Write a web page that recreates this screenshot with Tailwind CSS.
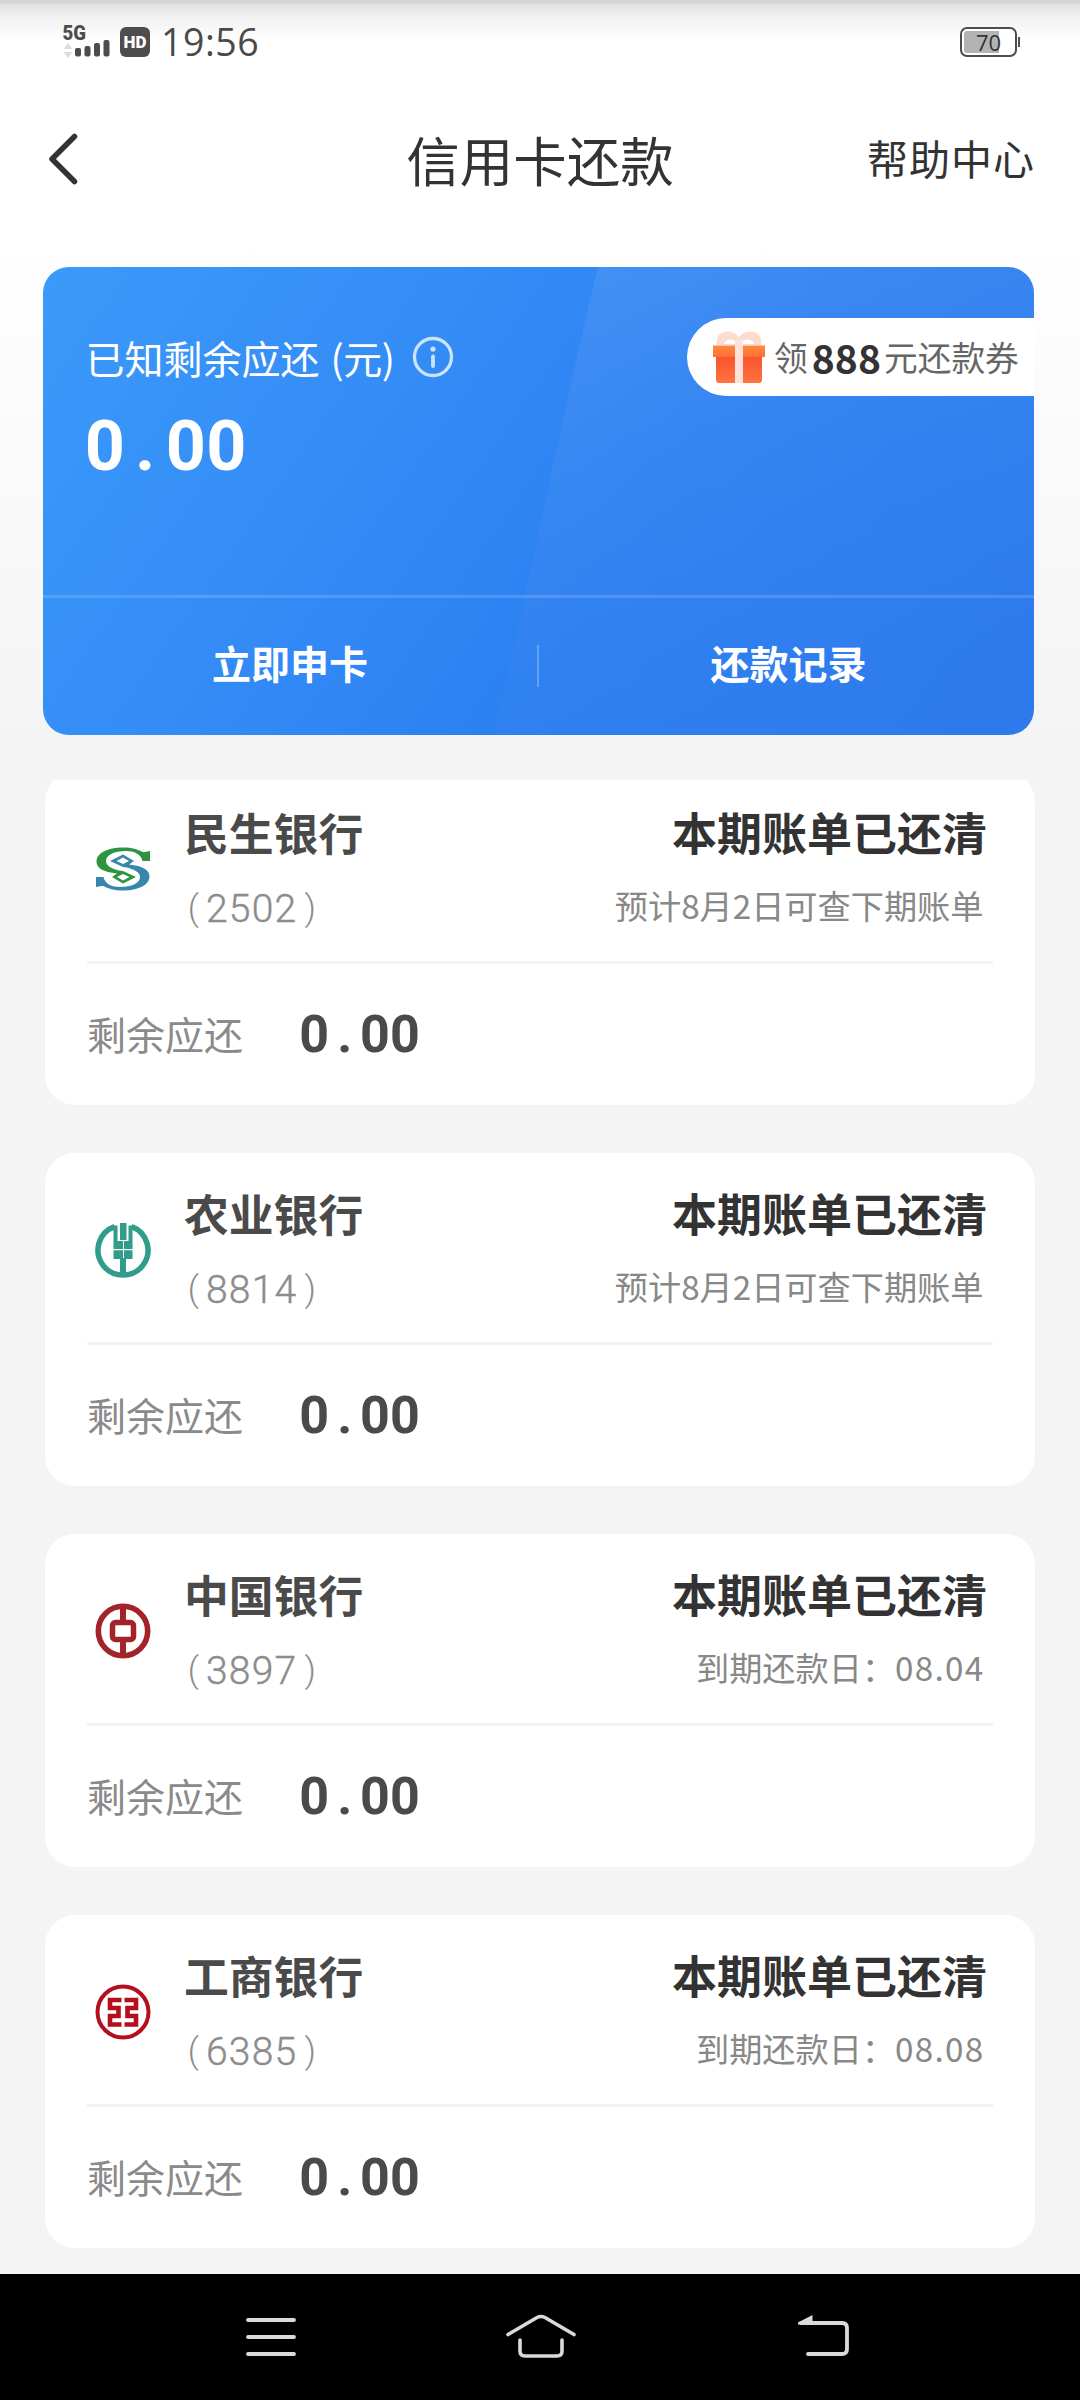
<!DOCTYPE html>
<html lang="zh-CN">
<head>
<meta charset="utf-8">
<title>信用卡还款</title>
<script src="https://cdn.jsdelivr.net/npm/@tailwindcss/browser@4"></script>
</head>
<body class="w-[1080px] h-[2400px] overflow-hidden flex flex-col font-['Noto_Sans_CJK_SC',sans-serif] text-[#333] bg-[linear-gradient(to_bottom,#fff_0,#fff_240px,#f4f4f4_740px)]">

<!-- status bar -->
<div class="h-[84px] shrink-0 flex items-start justify-between pt-[25px] pl-[62px] pr-[60px] bg-[linear-gradient(to_bottom,#d4d4d4_0,#d4d4d4_3px,#e2e2e2_4px,#f0f0f0_16px,#fafafa_32px,#ffffff_42px)]">
  <div class="flex items-start">
    <svg class="w-[50px] h-[34px] overflow-visible" viewBox="0 0 50 34">
      <text x="0.5" y="14.500" font-family="Roboto" font-weight="900" font-size="19.500" textLength="23.500" lengthAdjust="spacingAndGlyphs" fill="#4d4d4d">5G</text>
      <path d="M6 18l4.500 6h-9zM6 33l4.500-6h-9z" fill="#dcdcdc"/>
      <g fill="#4d4d4d"><rect x="13" y="23" width="6" height="8.500" rx="2"/><rect x="22.500" y="21" width="6" height="10.500" rx="2"/><rect x="32" y="18" width="6" height="13.500" rx="2"/><rect x="41.500" y="15" width="6" height="16.500" rx="2"/></g>
    </svg>
    <div class="ml-2 mt-0.5 w-[30px] h-[30px] rounded-[6px] bg-[#4d4d4d] text-white flex items-center justify-center font-['Roboto',sans-serif] font-black text-[17px] leading-none">HD</div>
    <div class="ml-[11px] -mt-0.5 font-['Open_Sans',sans-serif] font-medium text-[37.500px] leading-[37px] tracking-[0.500px] text-[#4a4a4a]">19:56</div>
  </div>
  <div class="flex items-center mt-0.5">
    <div class="relative w-[57px] h-[30px] rounded-[7px] border-[2.500px] border-[#4d4d4d] p-[2px] bg-white">
      <div class="w-[35px] h-full bg-[#b3b3b3] rounded-l-[3px]"></div>
      <div class="absolute inset-0 flex items-center justify-center font-['Open_Sans',sans-serif] text-[22px] leading-none">70</div>
    </div>
    <div class="ml-px w-[2px] h-[10px] bg-[#4d4d4d]"></div>
  </div>
</div>

<!-- title bar -->
<div class="h-[183px] shrink-0 grid grid-cols-[1fr_auto_1fr] items-start pt-[34px] pl-[44px] pr-[44px]">
  <svg class="mt-[10px] w-[40px] h-[62px]" viewBox="0 0 40 62" fill="none" stroke="#333" stroke-width="5.500" stroke-linecap="round" stroke-linejoin="round"><path d="M30.500 8.500L8 31l22.500 22.500"/></svg>
  <div class="mt-1 text-[53.500px] leading-[74px]">信用卡还款</div>
  <div class="mt-1 justify-self-end text-[41px] leading-[70px] tracking-[1px] mr-px">帮助中心</div>
</div>

<!-- summary card -->
<section class="relative mx-[43px] w-[991px] h-[468px] shrink-0 rounded-[26px] overflow-hidden text-white bg-[linear-gradient(125deg,#3b9af9_0%,#348bf6_35%,#2b80f2_60%,#2a78ec_100%)]">
  <svg class="absolute inset-0 w-full h-full" viewBox="0 0 991 468" preserveAspectRatio="none">
    <defs><linearGradient id="sheen" x1="0" y1="0" x2="0.3" y2="1"><stop offset="0" stop-color="#6aa2f0" stop-opacity=".34"/><stop offset=".5" stop-color="#4d8ff0" stop-opacity=".26"/><stop offset="1" stop-color="#3a7eec" stop-opacity=".25"/></linearGradient></defs>
    <path d="M555 0H991V468H451C468 400 530 100 555 0z" fill="url(#sheen)"/>
  </svg>
  <div class="relative flex flex-col h-full">
    <div class="h-[328px] flex justify-between">
      <div class="pl-[42.500px] pt-[61px]">
        <div class="flex items-center h-[58px]">
          <div class="text-[39px] leading-[57px] whitespace-pre">已知剩余应还<span class="ml-[11px] tracking-[-0.500px]">(元)</span></div>
          <svg class="ml-[18px] w-[42px] h-[42px]" viewBox="0 0 42 42" fill="none" stroke="#c9e4ff"><circle cx="21" cy="21" r="18.500" stroke-width="3.300"/><path d="M21 20.500V30" stroke-width="3.800" stroke-linecap="round"/><circle cx="21" cy="13" r="2.600" fill="#c9e4ff" stroke="none"/></svg>
        </div>
        <div class="mt-[18px] -ml-px flex font-['Roboto',sans-serif] font-bold text-[70px] leading-[84px]"><span class="w-[40.500px] text-center">0</span><span class="w-[40.500px] text-center">.</span><span class="w-[40.500px] text-center">0</span><span class="w-[40.500px] text-center">0</span></div>
      </div>
      <div class="mt-[51px] w-[347px] h-[78px] rounded-l-full bg-white flex items-center pl-[26px]">
        <svg class="w-[52px] h-[54px] mr-[9px] shrink-0" viewBox="0 0 52 54">
          <defs>
            <linearGradient id="lid" x1="0" y1="0" x2="0" y2="1"><stop offset="0" stop-color="#fd8a40"/><stop offset="1" stop-color="#ff7035"/></linearGradient>
            <linearGradient id="box" x1="0" y1="0" x2="0" y2="1"><stop offset="0" stop-color="#f9532c"/><stop offset="1" stop-color="#ff7440"/></linearGradient>
          </defs>
          <path fill-rule="evenodd" fill="#fddccf" d="M4 15C2 4 10 1 16 1.500c5 .3 8 3 10 6 2-3 5-5.700 10-6C42 1 50 4 48 15zM11 13c3-4 8-5 12-1v2H11zM41 13c-3-4-8-5-12-1v2h12z"/>
          <path d="M3 26h46v24a3 3 0 0 1-3 3H6a3 3 0 0 1-3-3z" fill="url(#box)"/>
          <path d="M0 15.500h52V27H0z" fill="url(#lid)"/>
          <path d="M22 9h8v44h-8z" fill="#fee1d7"/>
        </svg>
        <div class="flex items-center text-[33.700px] leading-[50px] text-[#666]"><span>领</span><span class="ml-[4px] mr-[3px] font-bold text-[39px] tracking-[0.100px] text-[#333]">888</span><span>元还款券</span></div>
      </div>
    </div>
    <div class="h-[3px] bg-white/15"></div>
    <div class="flex-1 flex items-start pt-[35px] font-bold text-[39px] leading-[58px]">
      <div class="w-[494px] text-center">立即申卡</div>
      <div class="mt-[12px] w-[2px] h-[42px] bg-white/25"></div>
      <div class="flex-1 text-center pl-1">还款记录</div>
    </div>
  </div>
</section>

<!-- bank list; the first card is scrolled slightly under its top edge -->
<main class="mt-[45px] h-[1494px] shrink-0 overflow-hidden pl-[45px] pr-[45px]">
  <div class="-mt-2 flex flex-col gap-12" id="list"></div>
</main>

<!-- navigation bar -->
<nav class="flex-1 bg-black flex items-start pt-[38px] pl-[243px]">
  <svg class="w-[56px] h-[50px]" viewBox="0 0 56 50" fill="none" stroke="#dadada" stroke-width="3.800" stroke-linecap="round"><path d="M5 8h46M5 25h46M5 42h46"/></svg>
  <svg class="ml-[204px] w-[76px] h-[50px]" viewBox="0 0 76 50" fill="none" stroke="#dadada" stroke-width="3.600" stroke-linecap="round"><path d="M5 22.500L34 5.500q4-2 8 0L71 22.500M17 28v11q0 5 5 5h32q5 0 5-5V28"/></svg>
  <svg class="ml-[218px] w-[56px] h-[50px]" viewBox="0 0 56 50" fill="none" stroke="#dadada" stroke-width="3.800" stroke-linecap="round"><path d="M4 11H45q5 0 5 5v21q0 5-5 5H11"/><path d="M1 12.500V10.500L15.500 3v9.500z" fill="#dadada" stroke="none"/></svg>
</nav>

<script>
const logos = {
  cmbc: `<path id="arm" fill="#2f9440" fill-rule="evenodd" d="M55 20H47.500C46 13 39 10 31 10 19 10 11 14 11 20c0 5 6 7.500 13 9.500L28 30l13 6-13 6.500L17 36l5-3.500C8 31 1.500 27 1.500 20.500 1.500 12 13 6.500 28 6.500c9 0 15 2 19.500 4.500 3 0 5-.5 7.500-1zM28 33l-6 3 6 3.500 6.500-3.500z"/>
      <path fill="#3786ae" fill-rule="evenodd" transform="rotate(180 28 28)" d="M55 20H47.500C46 13 39 10 31 10 19 10 11 14 11 20c0 5 6 7.500 13 9.500L28 30l13 6-13 6.500L17 36l5-3.500C8 31 1.500 27 1.500 20.500 1.500 12 13 6.500 28 6.500c9 0 15 2 19.500 4.500 3 0 5-.5 7.500-1zM28 33l-6 3 6 3.500 6.500-3.500z"/>`,
  abc: `<path fill="none" stroke="#2f9d89" stroke-width="5.500" d="M19.500 4.600A25 25 0 1 0 36.500 4.600"/>
      <path fill="#2f9d89" d="M25 1h6.500v17H25zM18.500 3.500h4V19h5.500v8h-9.500zM37.500 3.500h-4V19H29v8h8.500zM18.500 28.200H28V37h-9.500zM29 28.200h8.500V37H29zM25 36h6v16h-6z"/>`,
  boc: `<g fill="none" stroke="#a4232a"><circle cx="28" cy="28" r="24.700" stroke-width="5.600"/><rect x="17.500" y="19.500" width="21" height="17" rx="3" stroke-width="5.500"/><path stroke-width="6" d="M28 4v15M28 38v14"/></g>`,
  icbc: `<g fill="none" stroke="#b50f1e"><circle cx="28" cy="28" r="25.500" stroke-width="4"/>
      <path stroke-width="4.600" d="M26.500 16H15V24h8.500v8H15V40.500h11.500M29.500 16H41V24h-8.500v8H41V40.500H29.500"/></g>`
};
const banks = [
  ['cmbc', '民生银行', '2502', '预计8月2日可查下期账单'],
  ['abc',  '农业银行', '8814', '预计8月2日可查下期账单'],
  ['boc',  '中国银行', '3897', '到期还款日：<span class="tracking-[1.300px] -mr-px">08.04</span>'],
  ['icbc', '工商银行', '6385', '到期还款日：<span class="tracking-[1.300px] -mr-px">08.08</span>']
];
document.getElementById('list').innerHTML = banks.map(([logo, name, num, note]) => `
  <article class="h-[333px] rounded-[30px] bg-white pl-[42px] pr-[42px] flex flex-col">
    <div class="h-[189px] flex">
      <svg class="mt-[69px] ml-[8px] w-[56px] h-[56px] shrink-0" viewBox="0 0 56 56">${logos[logo]}</svg>
      <div class="ml-[33px] pt-[28px]">
        <div class="text-[44.800px] leading-[64px] font-bold text-[#4a4a4a]">${name}</div>
        <div class="mt-[20px] -ml-[3.500px] flex font-['Roboto',sans-serif] text-[39px] leading-[50px] text-[#8c8c8c]"><span class="w-[25.500px] text-center text-[35px] font-light">(</span><span class="tracking-[1.200px] font-light [-webkit-text-stroke:0.4px_#8c8c8c]">${num}</span><span class="w-[25.500px] text-center text-[35px] font-light">)</span></div>
      </div>
      <div class="ml-auto pr-[6px] pt-[28px] text-right">
        <div class="text-[45px] leading-[64px] font-bold text-[#333]">本期账单已还清</div>
        <div class="mt-[17px] pr-[3.500px] text-[33.200px] leading-[48px] text-[#888]">${note}</div>
      </div>
    </div>
    <div class="h-[3px] bg-[#f3f3f3]"></div>
    <div class="flex items-start pt-[41px]">
      <div class="-mt-px text-[39px] leading-[58px] text-[#8a8a8a]">剩余应还</div>
      <div class="mt-px ml-[56px] flex font-['Roboto',sans-serif] font-bold text-[52px] leading-[57px] text-[#4a4a4a]"><span class="w-[30.500px] text-center">0</span><span class="w-[30.500px] text-center">.</span><span class="w-[30px] text-center">0</span><span class="w-[30px] text-center">0</span></div>
    </div>
  </article>`).join('');
</script>
</body>
</html>
